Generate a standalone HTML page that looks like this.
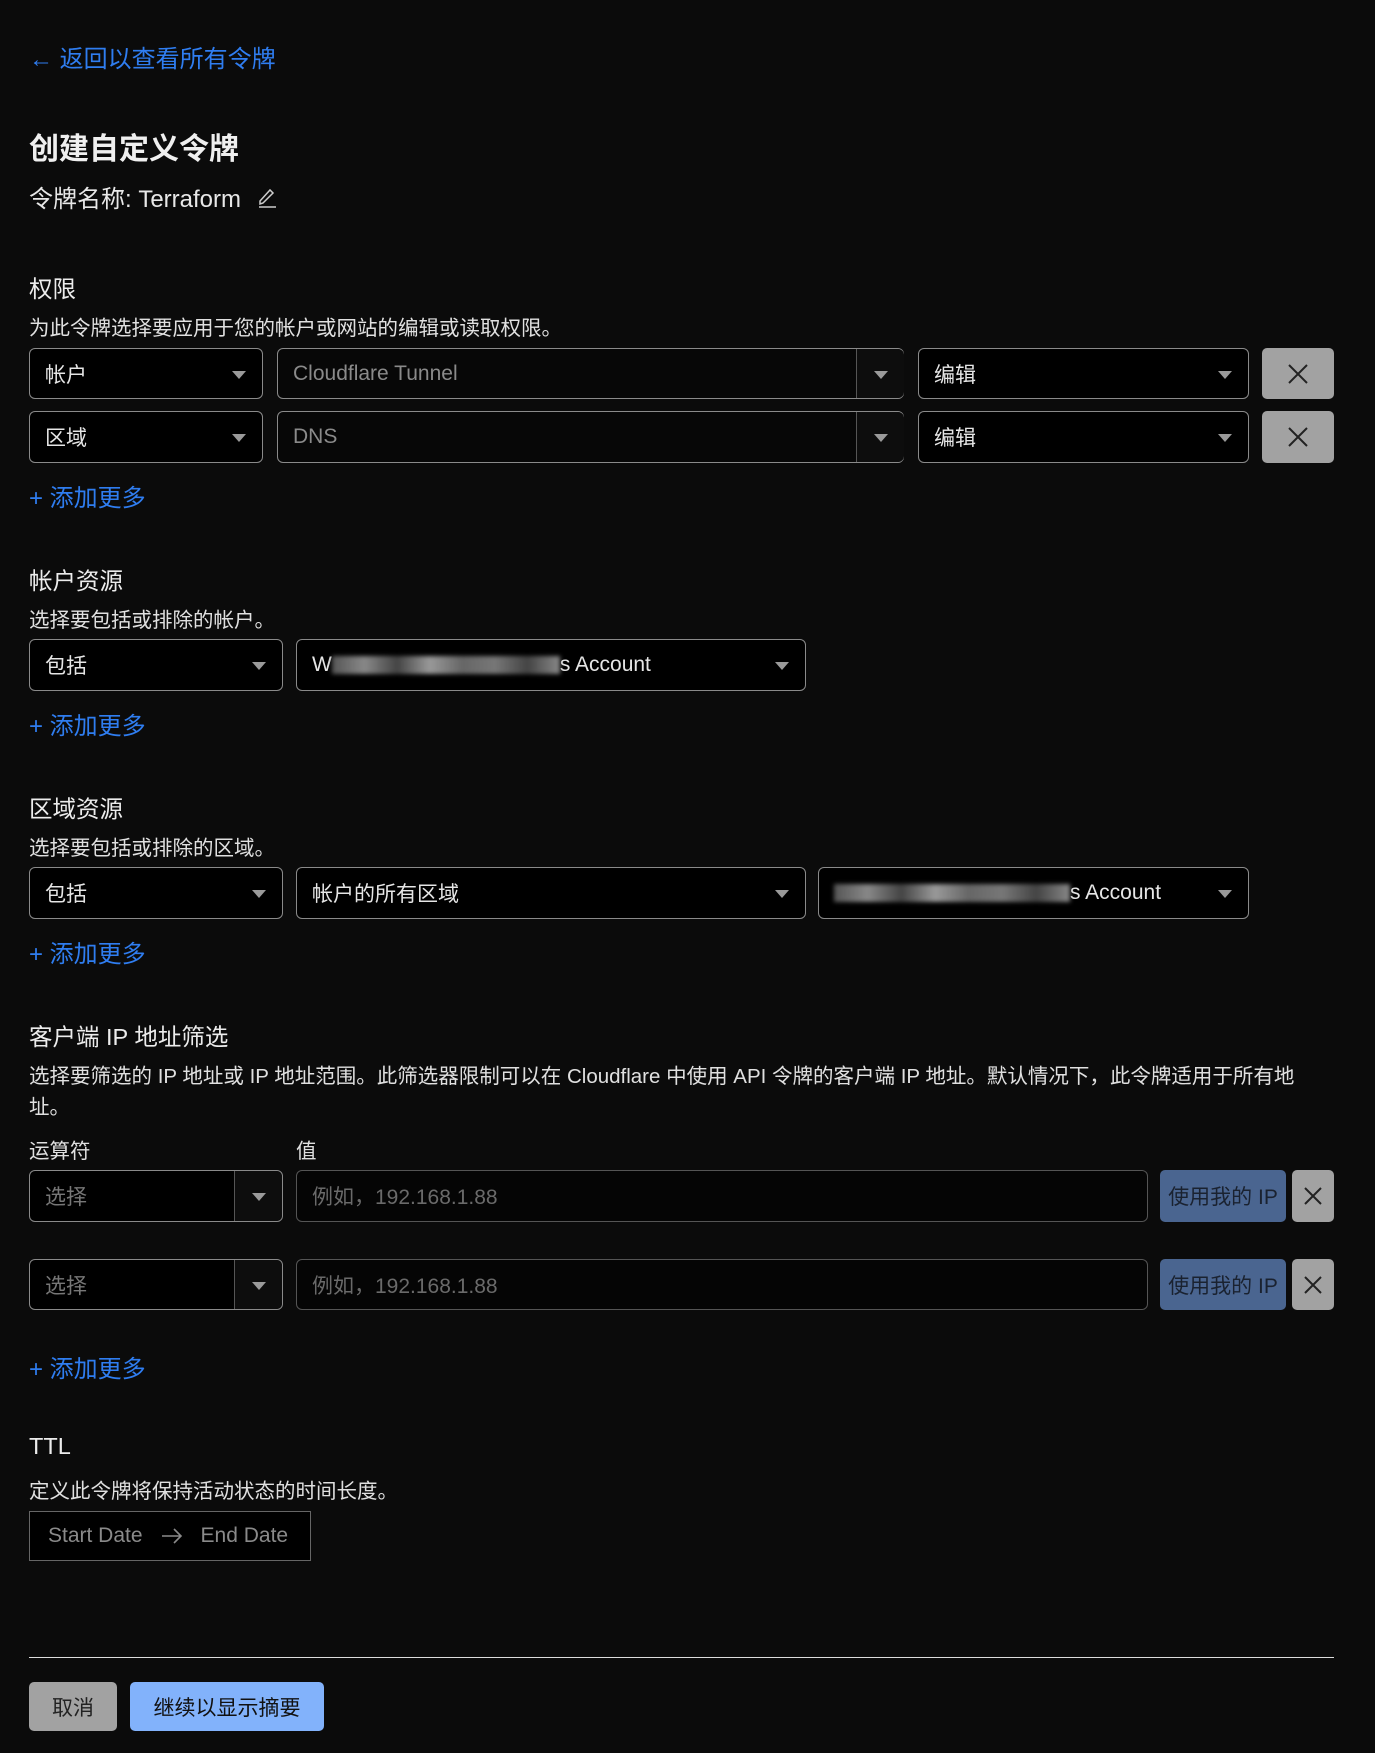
<!DOCTYPE html>
<html><head><meta charset="utf-8"><style>
*{box-sizing:border-box;margin:0;padding:0}
body{width:1375px;height:1753px;background:#0b0b0b;color:#e6e6e6;font-family:"Liberation Sans","Noto Sans CJK SC",sans-serif;position:relative;overflow:hidden}
.a{position:absolute;white-space:nowrap}
.link{color:#2f7df0;font-size:24px}
.h{font-size:23.5px;color:#ececec}
.d{font-size:20.5px;color:#e0e0e0}
.box{position:absolute;background:#000;border:1px solid #8a8a8a;border-radius:6px;font-size:21px;color:#e6e6e6;display:flex;align-items:center;padding-left:15px}
.tri{position:absolute;right:16px;top:50%;margin-top:-3px;width:0;height:0;border-left:7px solid transparent;border-right:7px solid transparent;border-top:8px solid #9a9a9a}
.div{position:absolute;top:0;bottom:0;border-left:1px solid #555;background:#0d0d0d}
.x{position:absolute;background:#a2a2a2;border-radius:5px;display:flex;align-items:center;justify-content:center}
.ip{position:absolute;background:#4a6590;border-radius:5px;color:#1a2230;font-size:21px;display:flex;align-items:center;justify-content:center}
.ph{color:#6a6a6a}
.blur{display:inline-block;height:18px;background:linear-gradient(90deg,#555,#888,#444,#999,#666,#777,#444,#888);filter:blur(2px)}
</style></head><body>
<div class="a link" style="left:29px;top:39px">← 返回以查看所有令牌</div>
<div class="a" style="left:29px;top:124px;font-size:30px;font-weight:bold;color:#efefef">创建自定义令牌</div>
<div class="a" style="left:29px;top:179px;font-size:24px;color:#e8e8e8">令牌名称: Terraform <svg width="22" height="22" viewBox="0 0 22 22" style="margin-left:8px;vertical-align:-1px"><path d="M4 15 L14 4 L17 7 L7 17 L4 18 Z M3 21 H20" fill="none" stroke="#ccc" stroke-width="1.5"/></svg></div>

<div class="a h" style="left:29px;top:270px">权限</div>
<div class="a d" style="left:29px;top:311px">为此令牌选择要应用于您的帐户或网站的编辑或读取权限。</div>

<div class="box" style="left:29px;top:348px;width:234px;height:51px">帐户<span class="tri"></span></div>
<div class="box" style="left:277px;top:348px;width:627px;height:51px;color:#8a8a8a;background:#070707">Cloudflare Tunnel<div class="div" style="left:578px;width:48px;border-radius:0 6px 6px 0"><span class="tri" style="right:16px"></span></div></div>
<div class="box" style="left:918px;top:348px;width:331px;height:51px">编辑<span class="tri"></span></div>
<div class="x" style="left:1262px;top:348px;width:72px;height:51px"><svg width="22" height="22"><path d="M2 2L20 20M20 2L2 20" stroke="#222" stroke-width="2"/></svg></div>

<div class="box" style="left:29px;top:411px;width:234px;height:52px">区域<span class="tri"></span></div>
<div class="box" style="left:277px;top:411px;width:627px;height:52px;color:#8a8a8a;background:#070707">DNS<div class="div" style="left:578px;width:48px;border-radius:0 6px 6px 0"><span class="tri" style="right:16px"></span></div></div>
<div class="box" style="left:918px;top:411px;width:331px;height:52px">编辑<span class="tri"></span></div>
<div class="x" style="left:1262px;top:411px;width:72px;height:52px"><svg width="22" height="22"><path d="M2 2L20 20M20 2L2 20" stroke="#222" stroke-width="2"/></svg></div>
<div class="a link" style="left:29px;top:478px">+ 添加更多</div>

<div class="a h" style="left:29px;top:562px">帐户资源</div>
<div class="a d" style="left:29px;top:603px">选择要包括或排除的帐户。</div>
<div class="box" style="left:29px;top:639px;width:254px;height:52px">包括<span class="tri"></span></div>
<div class="box" style="left:296px;top:639px;width:510px;height:52px">W<span class="blur" style="width:228px"></span>s Account<span class="tri"></span></div>
<div class="a link" style="left:29px;top:706px">+ 添加更多</div>

<div class="a h" style="left:29px;top:790px">区域资源</div>
<div class="a d" style="left:29px;top:831px">选择要包括或排除的区域。</div>
<div class="box" style="left:29px;top:867px;width:254px;height:52px">包括<span class="tri"></span></div>
<div class="box" style="left:296px;top:867px;width:510px;height:52px">帐户的所有区域<span class="tri"></span></div>
<div class="box" style="left:818px;top:867px;width:431px;height:52px"><span class="blur" style="width:236px"></span>s Account<span class="tri"></span></div>
<div class="a link" style="left:29px;top:934px">+ 添加更多</div>

<div class="a h" style="left:29px;top:1018px">客户端 IP 地址筛选</div>
<div class="a d" style="left:29px;top:1059px">选择要筛选的 IP 地址或 IP 地址范围。此筛选器限制可以在 Cloudflare 中使用 API 令牌的客户端 IP 地址。默认情况下，此令牌适用于所有地</div>
<div class="a d" style="left:29px;top:1090px">址。</div>
<div class="a d" style="left:29px;top:1134px">运算符</div>
<div class="a d" style="left:296px;top:1134px">值</div>

<div class="box" style="left:29px;top:1170px;width:254px;height:52px;color:#777">选择<div class="div" style="left:204px;width:48px;border-radius:0 6px 6px 0"><span class="tri"></span></div></div>
<div class="box" style="left:296px;top:1170px;width:852px;height:52px;background:#050505;border-color:#555"><span class="ph">例如，192.168.1.88</span></div>
<div class="ip" style="left:1160px;top:1170px;width:126px;height:52px">使用我的 IP</div>
<div class="x" style="left:1292px;top:1170px;width:42px;height:52px"><svg width="20" height="20"><path d="M2 2L18 18M18 2L2 18" stroke="#222" stroke-width="2"/></svg></div>

<div class="box" style="left:29px;top:1259px;width:254px;height:51px;color:#777">选择<div class="div" style="left:204px;width:48px;border-radius:0 6px 6px 0"><span class="tri"></span></div></div>
<div class="box" style="left:296px;top:1259px;width:852px;height:51px;background:#050505;border-color:#555"><span class="ph">例如，192.168.1.88</span></div>
<div class="ip" style="left:1160px;top:1259px;width:126px;height:51px">使用我的 IP</div>
<div class="x" style="left:1292px;top:1259px;width:42px;height:51px"><svg width="20" height="20"><path d="M2 2L18 18M18 2L2 18" stroke="#222" stroke-width="2"/></svg></div>
<div class="a link" style="left:29px;top:1349px">+ 添加更多</div>

<div class="a h" style="left:29px;top:1433px">TTL</div>
<div class="a d" style="left:29px;top:1474px">定义此令牌将保持活动状态的时间长度。</div>
<div class="a" style="left:29px;top:1511px;width:282px;height:50px;background:#000;border:1px solid #666;font-size:21px;color:#8a8a8a;display:flex;align-items:center;padding-left:18px">Start Date <svg width="22" height="16" style="margin:0 18px"><path d="M1 8H20M13 1L20 8L13 15" fill="none" stroke="#8a8a8a" stroke-width="1.6"/></svg> End Date</div>

<div class="a" style="left:29px;top:1657px;width:1305px;height:1px;background:#ddd"></div>
<div class="a" style="left:29px;top:1682px;width:88px;height:49px;background:#a2a2a2;border-radius:5px;color:#222;font-size:21px;display:flex;align-items:center;justify-content:center">取消</div>
<div class="a" style="left:130px;top:1682px;width:194px;height:49px;background:#82b2fb;border-radius:5px;color:#111;font-size:21px;display:flex;align-items:center;justify-content:center">继续以显示摘要</div>
</body></html>
